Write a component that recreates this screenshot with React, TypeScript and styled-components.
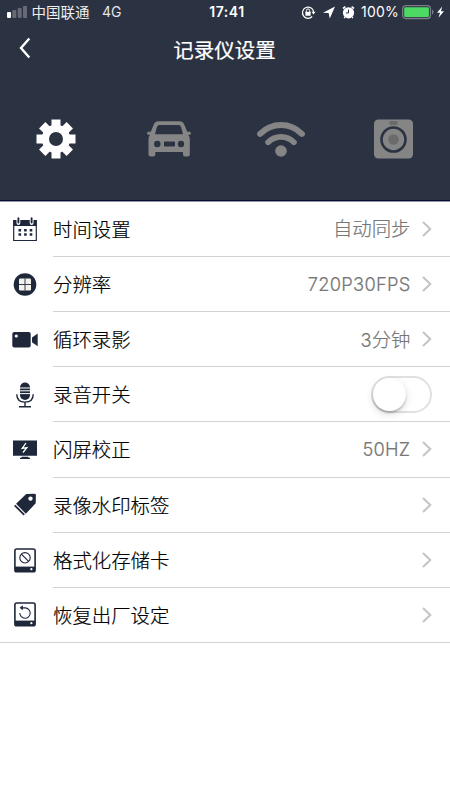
import React from 'react';
import styled, { createGlobalStyle } from 'styled-components';

const NAVY = '#2b3242';
const INK = '#1f273b';
const GREY = '#858585';

const GlobalStyle = createGlobalStyle`
  * { box-sizing: border-box; }
  body { margin: 0; background: #fff; }
  svg { display: block; flex: none; }
`;

const Screen = styled.main`
  width: 450px;
  height: 800px;
  overflow: hidden;
  background: #fff;
  font-family: Inter, 'Noto Sans CJK SC', sans-serif;
`;

const Header = styled.header`
  height: 201.85px;
  background: ${NAVY};
  border-bottom: 1px solid #92959f;
  box-shadow: inset 0 -1px 0 #080b35;
  color: #fff;
`;

const StatusBar = styled.div`
  display: grid;
  grid-template-columns: 204px 46px 200px;
  align-items: center;
  height: 24px;
  font-size: 14.5px;
  line-height: 24px;
`;

const Carrier = styled.div`
  display: flex;
  align-items: center;
  padding-left: 7px;
`;

const CarrierName = styled.span`
  margin-left: 4.5px;
  width: 70.5px;
  font-family: 'Noto Sans CJK SC', sans-serif;
  color: #eee;
`;

const Network = styled.span`
  font-size: 14px;
  color: #e4e5e8;
`;

const Clock = styled.span`
  text-align: center;
  font-size: 14px;
  font-weight: 600;
  letter-spacing: 0.5px;
`;

const Indicators = styled.div`
  display: flex;
  align-items: center;
  padding-left: 51px;
`;

const Percent = styled.span`
  margin-left: 6px;
  width: 41px;
  font-size: 14px;
  letter-spacing: 0.2px;
`;

const NavBar = styled.div`
  display: grid;
  grid-template-columns: 50px 1fr 50px;
  align-items: center;
  height: 53px;
  border-bottom: 1px solid #293040;
`;

const BackButton = styled.button`
  border: 0;
  padding: 0 0 4px 18px;
  background: none;
  color: #fff;
`;

const Title = styled.h1`
  margin: 0 1px 2px 0;
  text-align: center;
  font: 400 20.5px/48px 'Noto Sans CJK SC', sans-serif;
  -webkit-text-stroke: 0.2px currentColor;
`;

const Tabs = styled.nav`
  display: grid;
  grid-template-columns: repeat(4, 112.5px);
  height: 124px;
`;

const Tab = styled.button<{ $active?: boolean }>`
  display: flex;
  align-items: center;
  justify-content: center;
  border: 0;
  padding: 0;
  background: none;
  color: ${(p) => (p.$active ? '#fff' : GREY)};
`;

const Row = styled.div`
  display: grid;
  grid-template-columns: 50px 3px 1fr;
  height: 55.15px;
  color: ${INK};
  &:last-child { border-bottom: 1px solid #d2d2d2; }
`;

const RowIcon = styled.div`
  display: flex;
  align-items: center;
  justify-content: center;
`;

const RowBody = styled.div`
  grid-column: 3;
  display: flex;
  align-items: center;
  padding-right: 18px;
  border-bottom: 1px solid #d2d2d2;
  ${Row}:last-child & { border-bottom: 0; }
`;

const Label = styled.span`
  flex: 1;
  color: #000;
  font: 300 19.4px/28px 'Noto Sans CJK SC', sans-serif;
  -webkit-text-stroke: 0.2px currentColor;
`;

const Value = styled.span`
  margin-right: 11.5px;
  color: #777;
  font-size: 18.3px;
  font-weight: 300;
  line-height: 28px;
  letter-spacing: 0.25px;
  -webkit-text-stroke: 0.2px currentColor;
`;

const ValueCJK = styled.span`
  font: 300 19.4px/28px 'Noto Sans CJK SC', sans-serif;
  letter-spacing: 0;
`;

const Switch = styled.button`
  width: 61px;
  height: 37px;
  border: 2px solid #e1e1e1;
  border-radius: 19px;
  padding: 0;
  background: #fff;
`;

const Knob = styled.span`
  display: block;
  width: 33px;
  height: 33px;
  border-radius: 50%;
  background: #fff;
  box-shadow: 0 2px 2px rgba(0, 0, 0, 0.2), 0 3px 8px rgba(0, 0, 0, 0.14);
`;

const Chevron = () => (
  <svg width="10" height="16" viewBox="0 0 10 16" fill="none" stroke="#c3c3c8" strokeWidth="2">
    <path d="M1 1l7.3 7L1 15" />
  </svg>
);

const Signal = () => (
  <svg width="20" height="12" viewBox="0 0 20 12" fill="#656a76">
    <rect y="6" width="4" height="6" rx="1" fill="#fff" />
    <rect x="5.3" y="4" width="4" height="8" rx="1" />
    <rect x="10.7" y="2" width="4" height="10" rx="1" />
    <rect x="16" width="4" height="12" rx="1" />
  </svg>
);

const StatusIcons = () => (
  <svg width="54" height="15" viewBox="0 0 54 15" fill="#fff">
    <g fill="none" stroke="#fff" strokeWidth="1.2">
      <path d="M11.2 11.5A5.6 5.6 0 1 1 12.6 6.8" />
      <path d="M5.3 7V5.6a1.7 1.7 0 0 1 3.4 0V7" strokeWidth="1" />
    </g>
    <rect x="4.4" y="6.8" width="5.2" height="3.9" rx=".5" />
    <path d="M10.4 6.8h4.2l-2.1 2.8z" />
    <path d="M22 7.7L34 1.5l-5.2 12-1.2-5.6z" />
    <circle cx="47.5" cy="7.8" r="5.6" />
    <path d="M42 3.5l2.4-1.9M53 3.5l-2.4-1.9" stroke="#fff" strokeWidth="1.6" />
    <path d="M43.9 12l-.8 1.2M51.1 12l.8 1.2" stroke="#fff" strokeWidth="1.3" />
    <path d="M47.5 4.7V8h-2.6" fill="none" stroke={NAVY} strokeWidth="1" />
  </svg>
);

const Battery = () => (
  <svg width="43" height="16" viewBox="0 0 43 16">
    <rect x=".7" y="1.7" width="27.7" height="12.8" rx="3" fill="none" stroke="#7b7e88" strokeWidth="1.3" />
    <rect x="2.2" y="3.2" width="24.7" height="9.8" rx="1.2" fill="#4cd964" />
    <path d="M30 5.5c2 .7 2 4.3 0 5z" fill="#7b7e88" />
    <path d="M40.2 2.4L35 8.8h3l-1.5 5L42 7.2h-3z" fill="#fff" />
  </svg>
);

const Gear = () => (
  <svg width="40" height="40" viewBox="-20 -20 40 40" fill="currentColor">
    <circle r="10.6" fill="none" stroke="currentColor" strokeWidth="7.2" />
    {[0, 45, 90, 135, 180, 225, 270, 315].map((a) => (
      <path key={a} d="M-4.5-19.5h9v8h-9z" transform={`rotate(${a})`} />
    ))}
  </svg>
);

const Car = () => (
  <svg width="44" height="36" viewBox="0 0 44 36" fill="currentColor">
    <path
      fillRule="evenodd"
      d="M11 .3H33Q36 .3 37 3l3.3 7.8H42.5Q44 10.8 44 12.3T42.5 13.8H41.2Q42.8 15.5 42.8 18V33.5Q42.8 35.5 40.8 35.5H38Q36 35.5 36 33.5V31H8.3v2.5q0 2-2 2H3.5q-2 0-2-2V18q0-2.5 1.5-4.2H1.5Q0 13.8 0 12.3t1.5-1.5h2.3L7 3Q8 .3 11 .3zM12.3 4Q10.6 4 10 5.7L8 13.3H36L34 5.7Q33.4 4 31.7 4zM10.3 19.8a3.2 3.2 0 1 0 0 6.4 3.2 3.2 0 0 0 0-6.4zM34 19.8a3.2 3.2 0 1 0 0 6.4 3.2 3.2 0 0 0 0-6.4zM18 20.6q-1 0-1 1v3q0 1 1 1h9q1 0 1-1v-3q0-1-1-1z"
    />
  </svg>
);

const Wifi = () => (
  <svg width="48" height="36" viewBox="0 0 48 36" fill="none" stroke="currentColor" strokeLinecap="round">
    <path d="M3.1 12.8Q12 4 24 4T44.9 12.8" strokeWidth="6" />
    <path d="M11.1 21.2Q16.5 15.8 24 15.8T36.9 21.2" strokeWidth="5.8" />
    <circle cx="24" cy="30" r="5.8" fill="currentColor" stroke="none" />
  </svg>
);

const Camera = () => (
  <svg width="39" height="40" viewBox="0 0 39 40">
    <rect y=".5" width="39" height="39" rx="4.2" fill="currentColor" />
    <rect x="15.5" y="2" width="8" height="4" fill="#6b6b6b" />
    <circle cx="19.5" cy="20.5" r="12" fill="none" stroke={NAVY} strokeWidth="2.6" />
    <circle cx="19.5" cy="20.5" r="5.3" fill="#6b6b6b" />
  </svg>
);

const Calendar = () => (
  <svg width="24" height="25" viewBox="0 0 24 25">
    <path d="M.7 3.5h22.6v20H.7z" fill="#fff" stroke={INK} strokeWidth="1.2" />
    <path d="M.5 3h23v6H.5z" fill={INK} />
    <g stroke="#fff" strokeWidth="3.8" strokeLinecap="round"><path d="M5.4 1v5M18.6 1v5" /></g>
    <g stroke={INK} strokeWidth="1.9" strokeLinecap="round"><path d="M5.4 1.2v4.4M18.6 1.2v4.4" /></g>
    <path d="M5.5 13.3h13.8M5.5 17.5h13.8" stroke={INK} strokeWidth="2.4" strokeDasharray="2.6 3" />
  </svg>
);

const Resolution = () => (
  <svg width="24" height="24" viewBox="0 0 24 24">
    <circle cx="12" cy="11.5" r="11.3" fill={INK} />
    <rect x="6" y="5.5" width="12" height="12" rx="1.2" fill="#f1f0ea" />
    <path d="M12 5.5v12M6 11.5h12" stroke={INK} strokeWidth="0.9" />
  </svg>
);

const Video = () => (
  <svg width="26" height="18" viewBox="0 0 26 18" fill={INK}>
    <rect x=".3" y="1" width="18.4" height="15.5" rx="2" />
    <path d="M25.7 2.5v12.8L20 11.2V6.5z" />
    <circle cx="4.3" cy="5" r="1.6" fill="#fff" />
  </svg>
);

const Microphone = () => (
  <svg width="20" height="26" viewBox="0 0 20 26" fill="none" stroke={INK} strokeWidth="1.4">
    <rect x="5" y=".5" width="10" height="17.5" rx="5" fill={INK} stroke="none" />
    <path d="M5 6h10M5 8.8h10M5 11.6h10" stroke="#fff" strokeWidth="1" />
    <path d="M1.8 12.2q0 7.9 8.2 7.9t8.2-7.9M10 20v4.7M4 24.8h12" />
  </svg>
);

const Monitor = () => (
  <svg width="24" height="20" viewBox="0 0 24 20" fill={INK}>
    <path d="M0 .5h24v15.2H0zM9 16.7h6l1 1h1v1.4H7v-1.4h1z" />
    <path d="M13 3L9.2 8.4l4.6-.7L10 12.5" fill="none" stroke="#fff" strokeWidth="1.3" />
  </svg>
);

const Tag = () => (
  <svg width="24" height="24" viewBox="0 0 24 24" fill={INK}>
    <path fillRule="evenodd" d="M13.2 1.1L21.5.8q1.4 0 1.4 1.4L22.7 10.2 12.8 20.8 3.1 10.7zM17.5 3.4a2.2 2.2 0 1 0 0 4.4 2.2 2.2 0 0 0 0-4.4z" />
    <path d="M1.7 12.3l9.5 9.6" stroke={INK} strokeWidth="1.8" />
  </svg>
);

const Disk = ({ children }: { children: React.ReactNode }) => (
  <svg width="22" height="25" viewBox="0 0 22 25" fill="none" stroke={INK}>
    <rect x=".9" y="1" width="20.2" height="22.8" rx="1.8" strokeWidth="1.6" />
    <path d="M1 18.6h20v5H1z" fill={INK} stroke="none" />
    <circle cx="17.4" cy="21.2" r="1.1" fill="#fff" stroke="none" />
    {children}
  </svg>
);

const FormatDisk = () => (
  <Disk>
    <circle cx="11" cy="9.8" r="5.2" strokeWidth="1.1" />
    <path d="M7.4 6.2l7.2 7.2" strokeWidth="1.2" />
  </Disk>
);

const RestoreDisk = () => (
  <Disk>
    <path d="M7.5 5.9h3.8a5.2 5.2 0 1 1-5.5 5.2" strokeWidth="1.1" />
    <path d="M8.8 3.2L5.6 5.8 8.8 8.2z" fill={INK} stroke="none" />
  </Disk>
);

const settings: { icon: React.ReactNode; label: string; value?: React.ReactNode; toggle?: boolean }[] = [
  { icon: <Calendar />, label: '时间设置', value: <Value><ValueCJK>自动同步</ValueCJK></Value> },
  { icon: <Resolution />, label: '分辨率', value: <Value>720P30FPS</Value> },
  { icon: <Video />, label: '循环录影', value: <Value>3<ValueCJK>分钟</ValueCJK></Value> },
  { icon: <Microphone />, label: '录音开关', toggle: true },
  { icon: <Monitor />, label: '闪屏校正', value: <Value>50HZ</Value> },
  { icon: <Tag />, label: '录像水印标签' },
  { icon: <FormatDisk />, label: '格式化存储卡' },
  { icon: <RestoreDisk />, label: '恢复出厂设定' },
];

export default function App() {
  return (
    <Screen>
      <GlobalStyle />
      <Header>
        <StatusBar>
          <Carrier>
            <Signal />
            <CarrierName>中国联通</CarrierName>
            <Network>4G</Network>
          </Carrier>
          <Clock>17:41</Clock>
          <Indicators>
            <StatusIcons />
            <Percent>100%</Percent>
            <Battery />
          </Indicators>
        </StatusBar>
        <NavBar>
          <BackButton aria-label="返回">
            <svg width="13" height="22" viewBox="0 0 13 22" fill="none" stroke="currentColor" strokeWidth="2.4">
              <path d="M11.3 1.5L3 11l8.3 9.5" />
            </svg>
          </BackButton>
          <Title>记录仪设置</Title>
        </NavBar>
        <Tabs>
          <Tab $active aria-label="设置"><Gear /></Tab>
          <Tab aria-label="车辆"><Car /></Tab>
          <Tab aria-label="无线网络"><Wifi /></Tab>
          <Tab aria-label="摄像头"><Camera /></Tab>
        </Tabs>
      </Header>
      <section>
        {settings.map((s) => (
          <Row key={s.label}>
            <RowIcon>{s.icon}</RowIcon>
            <RowBody>
              <Label>{s.label}</Label>
              {s.value}
              {s.toggle ? (
                <Switch role="switch" aria-checked={false} aria-label={s.label}><Knob /></Switch>
              ) : (
                <Chevron />
              )}
            </RowBody>
          </Row>
        ))}
      </section>
    </Screen>
  );
}
